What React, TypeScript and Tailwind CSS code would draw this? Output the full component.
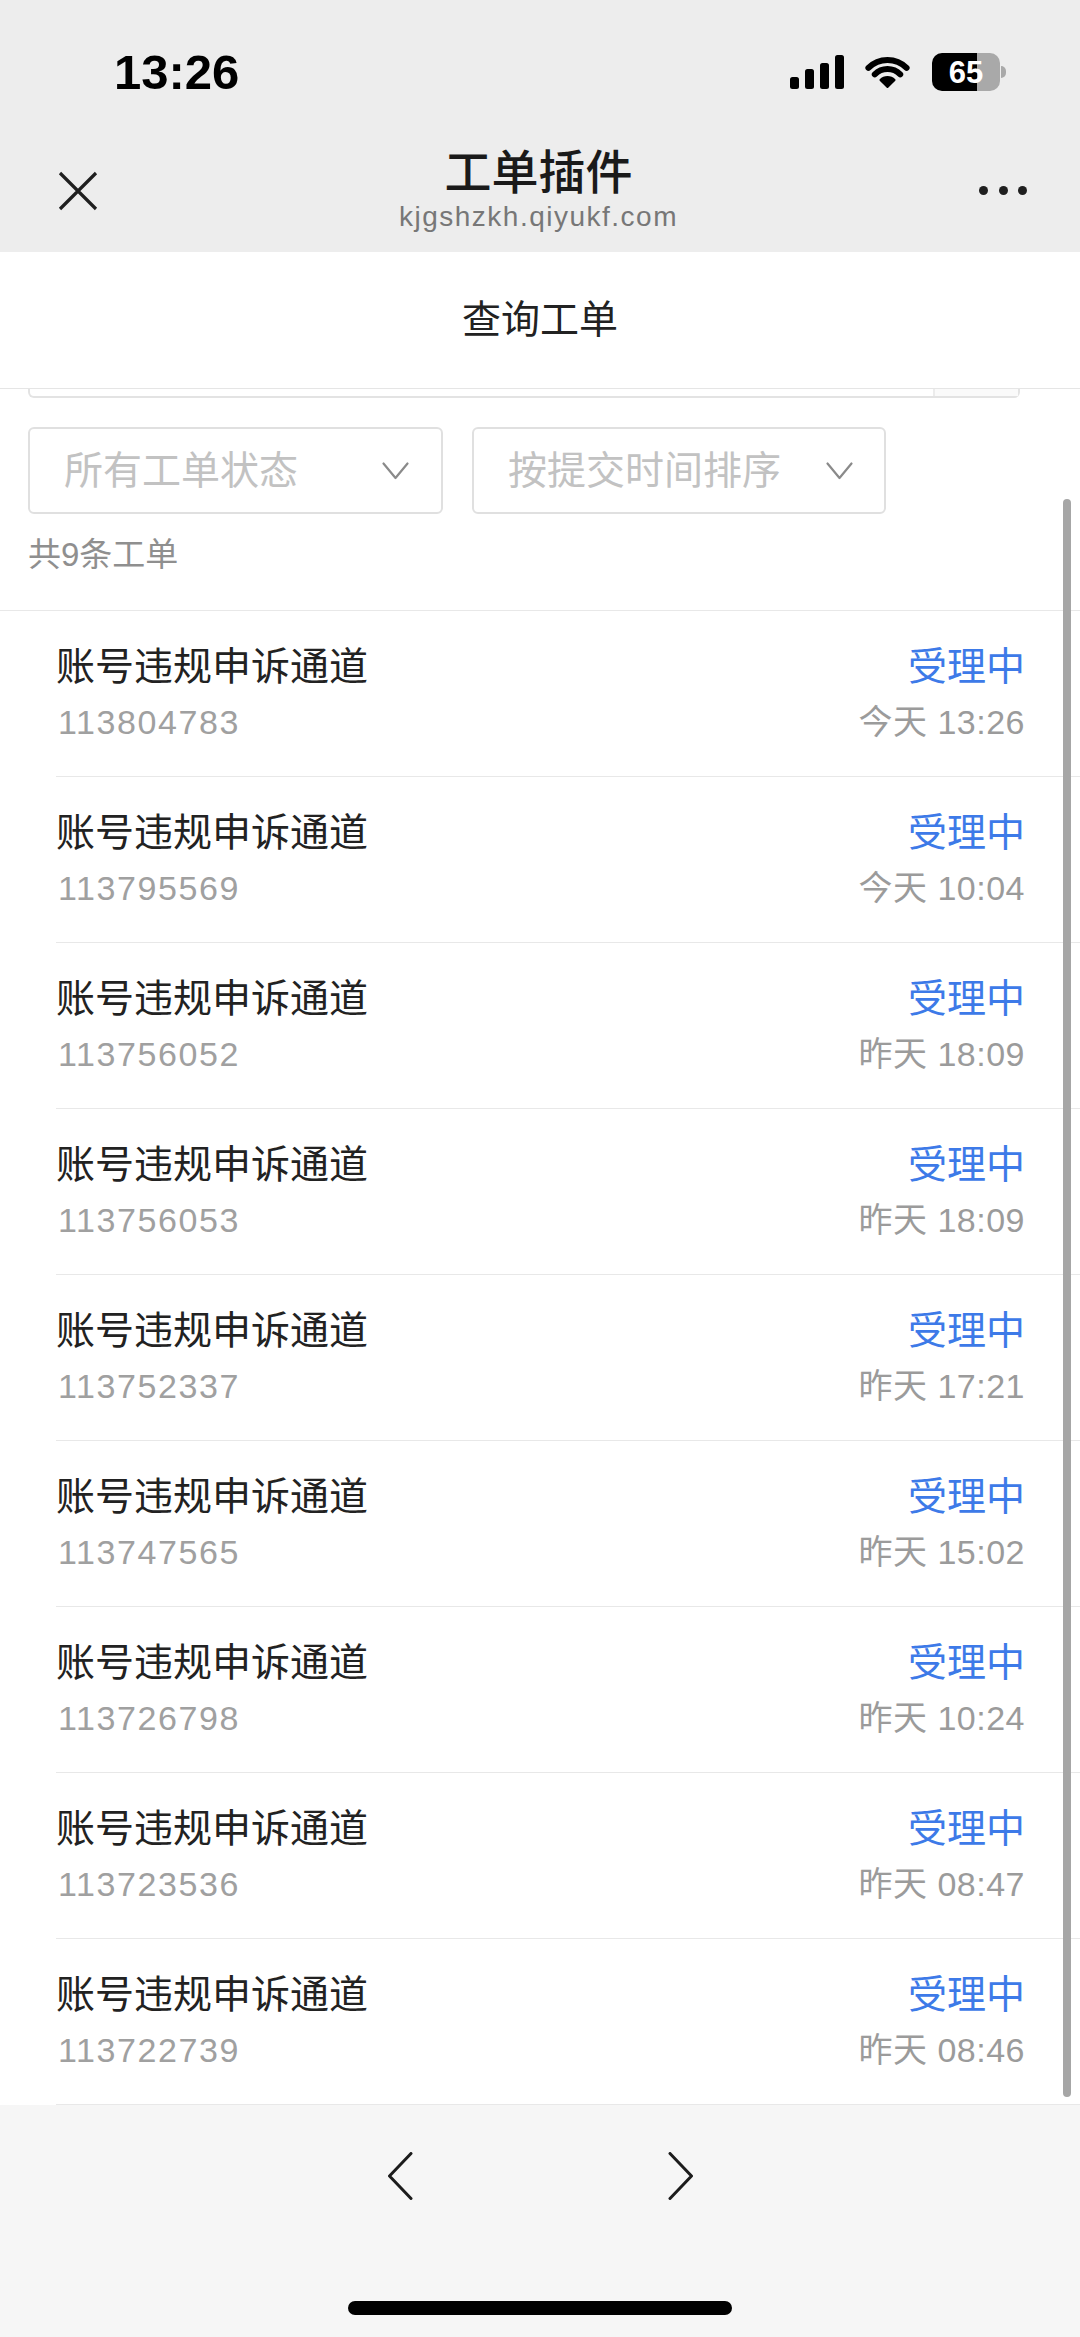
import React from "react";

const rows: [string, string][] = [
  ["113804783", "今天 13:26"],
  ["113795569", "今天 10:04"],
  ["113756052", "昨天 18:09"],
  ["113756053", "昨天 18:09"],
  ["113752337", "昨天 17:21"],
  ["113747565", "昨天 15:02"],
  ["113726798", "昨天 10:24"],
  ["113723536", "昨天 08:47"],
  ["113722739", "昨天 08:46"],
];

function Signal() {
  return (
    <svg width="54" height="34" viewBox="0 0 54 34">
      <rect x="0" y="22" width="9" height="12" rx="2.5" fill="#000" />
      <rect x="15" y="14" width="9" height="20" rx="2.5" fill="#000" />
      <rect x="30" y="8" width="9" height="26" rx="2.5" fill="#000" />
      <rect x="45" y="0" width="9" height="34" rx="2.5" fill="#000" />
    </svg>
  );
}

function Wifi() {
  return (
    <svg width="47" height="34" viewBox="0 0 47 34">
      <path d="M23.5 32 L16.43 24.93 A10 10 0 0 1 30.57 24.93 Z" fill="#000" strokeLinejoin="round" stroke="#000" strokeWidth="2" />
      <path d="M10.77 19.27 A18 18 0 0 1 36.23 19.27" fill="none" stroke="#000" strokeWidth="6" strokeLinecap="round" />
      <path d="M4.41 12.91 A27 27 0 0 1 42.59 12.91" fill="none" stroke="#000" strokeWidth="6" strokeLinecap="round" />
    </svg>
  );
}

function Battery() {
  return (
    <div className="flex items-center">
      <div className="relative w-[68px] h-[38px] rounded-[10px] overflow-hidden flex">
        <div className="w-[45px] bg-black" />
        <div className="flex-1 bg-[#a9a9a9]" />
        <div className="absolute inset-0 flex items-center justify-center text-white text-[31px] font-bold leading-none">
          65
        </div>
      </div>
      <div className="w-[5px] h-[12px] ml-[1px] rounded-r-full bg-[#a9a9a9]" />
    </div>
  );
}

function ChevronDown() {
  return (
    <svg width="27" height="18" viewBox="0 0 27 18">
      <path d="M1.5 1.5 L13.5 16 L25.5 1.5" fill="none" stroke="#8a8a8a" strokeWidth="2.2" strokeLinecap="round" strokeLinejoin="round" />
    </svg>
  );
}

export default function App() {
  return (
    <div className="relative w-[1080px] h-[2337px] overflow-hidden bg-white flex flex-col [font-family:Liberation_Sans,Noto_Sans_CJK_SC,sans-serif]">
      {/* gray top header */}
      <div className="bg-[#ededed] h-[252px] shrink-0 flex flex-col">
        <div className="h-[110px] flex items-start justify-between pt-[48px]">
          <span className="ml-[114px] text-[49px] leading-[48px] font-bold text-black">13:26</span>
          <div className="flex items-center h-[48px] mr-[74px]">
            <Signal />
            <div className="ml-[20px]">
              <Wifi />
            </div>
            <div className="ml-[21px]">
              <Battery />
            </div>
          </div>
        </div>
        <div className="h-[142px] flex items-start">
          <svg className="ml-[58px] mt-[61px] shrink-0" width="40" height="40" viewBox="0 0 40 40">
            <path d="M2 2 L38 38 M38 2 L2 38" stroke="#1f1f1f" strokeWidth="3.2" />
          </svg>
          <div className="flex-1 flex flex-col items-center mt-[37px]">
            <div className="text-[47px] leading-[52px] font-medium text-[#1a1a1a]">工单插件</div>
            <div className="mt-[2px] text-[28px] leading-[32px] tracking-[1.5px] text-[#777]">kjgshzkh.qiyukf.com</div>
          </div>
          <div className="mr-[53px] mt-[76px] flex gap-[10.5px] shrink-0">
            <div className="w-[9px] h-[9px] rounded-full bg-[#1f1f1f]" />
            <div className="w-[9px] h-[9px] rounded-full bg-[#1f1f1f]" />
            <div className="w-[9px] h-[9px] rounded-full bg-[#1f1f1f]" />
          </div>
        </div>
      </div>

      {/* sub header */}
      <div className="h-[137px] shrink-0 flex items-center justify-center border-b border-[#e5e5e5]">
        <span className="text-[39px] leading-[48px] text-[#222]">查询工单</span>
      </div>

      {/* hidden search input remnant */}
      <div className="ml-[28px] mr-[60px] h-[9px] shrink-0 flex border-x-2 border-b-2 border-[#e3e3e3] rounded-b-[6px]">
        <div className="flex-1" />
        <div className="w-[85px] border-l-2 border-[#ececec] bg-[#fafafa]" />
      </div>

      {/* filters */}
      <div className="shrink-0 border-b border-[#e8e8e8] pb-[35px]">
        <div className="mt-[29px] px-[28px] flex gap-[29px]">
          <div className="w-[415px] h-[87px] border-2 border-[#e0e0e0] rounded-[6px] flex items-center justify-between pl-[34px] pr-[32px]">
            <span className="text-[39px] leading-[48px] text-[#c2c2c2]">所有工单状态</span>
            <ChevronDown />
          </div>
          <div className="w-[414px] h-[87px] border-2 border-[#e0e0e0] rounded-[6px] flex items-center justify-between pl-[34px] pr-[31px]">
            <span className="text-[39px] leading-[48px] text-[#c2c2c2]">按提交时间排序</span>
            <ChevronDown />
          </div>
        </div>
        <div className="mt-[21px] px-[28px] text-[33px] leading-[40px] text-[#8f8f8f]">共9条工单</div>
      </div>

      {/* list */}
      <div className="shrink-0 flex flex-col">
        {rows.map(([id, time], i) => (
          <div key={i} className="ml-[56px] h-[166px] border-b border-[#e8e8e8] pr-[55px] pt-[32px] flex justify-between">
            <div className="flex flex-col">
              <span className="text-[39px] leading-[48px] text-[#222]">账号违规申诉通道</span>
              <span className="mt-[11px] ml-[2px] text-[34px] leading-[40px] tracking-[1.6px] text-[#a0a0a0]">{id}</span>
            </div>
            <div className="flex flex-col items-end">
              <span className="text-[39px] leading-[48px] text-[#3d7ae8]">受理中</span>
              <span className="mt-[11px] text-[34px] leading-[40px] tracking-[0.5px] text-[#9b9b9b]">{time}</span>
            </div>
          </div>
        ))}
      </div>

      {/* bottom toolbar */}
      <div className="flex-1 bg-[#f6f6f6] flex flex-col items-center">
        <div className="mt-[47px] flex gap-[255px]">
          <svg width="26" height="48" viewBox="0 0 26 48">
            <path d="M24 1.5 L2.5 24 L24 46.5" fill="none" stroke="#1c1c1c" strokeWidth="3" strokeLinecap="round" strokeLinejoin="round" />
          </svg>
          <svg width="26" height="48" viewBox="0 0 26 48">
            <path d="M2 1.5 L23.5 24 L2 46.5" fill="none" stroke="#1c1c1c" strokeWidth="3" strokeLinecap="round" strokeLinejoin="round" />
          </svg>
        </div>
        <div className="mt-[101px] w-[384px] h-[14px] rounded-full bg-black" />
      </div>

      {/* scrollbar */}
      <div className="absolute left-[1063px] top-[499px] w-[8px] h-[1598px] rounded-full bg-[#a6a6a6]" />
    </div>
  );
}
